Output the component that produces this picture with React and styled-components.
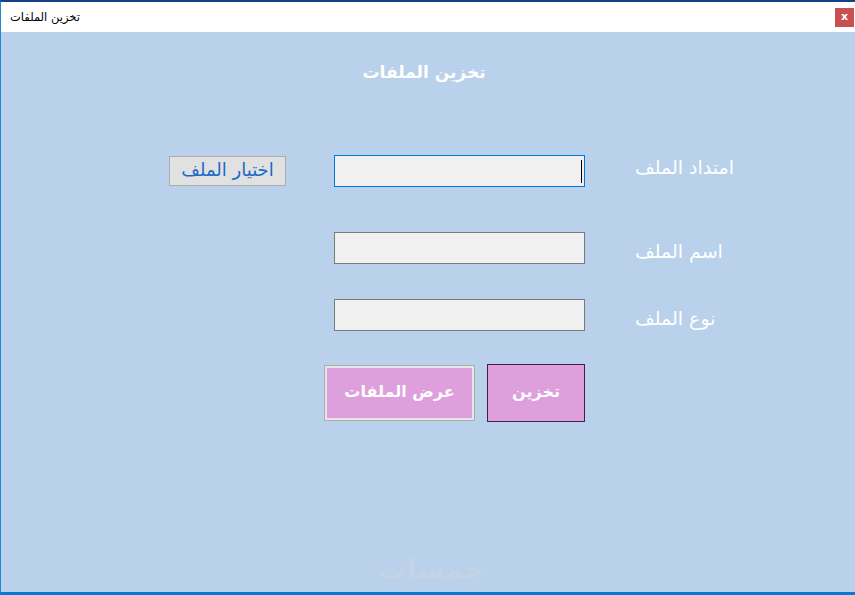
import styled, { createGlobalStyle } from 'styled-components';

const Global = createGlobalStyle`
  html, body {
    margin: 0;
    padding: 0;
    background: #b9d1ea;
  }
  #root {
    width: 855px;
    height: 595px;
  }
`;

export default function App() {
  return (
    <>
      <Global />
      <Window>
        <TitleBar>
          <Caption dir="rtl">تخزين الملفات</Caption>
          <CloseButton>x</CloseButton>
        </TitleBar>
        <Body>
          <Heading dir="rtl">تخزين الملفات</Heading>
          <Form>
            <Row>
              <Slot $w={118}>
                <BrowseButton dir="rtl">اختيار الملف</BrowseButton>
              </Slot>
              <Field $active />
              <Label dir="rtl" $offset={-4}>امتداد الملف</Label>
            </Row>
            <Row $top={45}>
              <Slot $w={118} />
              <Field />
              <Label dir="rtl" $offset={3}>اسم الملف</Label>
            </Row>
            <Row $top={35}>
              <Slot $w={118} />
              <Field />
              <Label dir="rtl" $offset={3}>نوع الملف</Label>
            </Row>
            <Actions>
              <ActionButton $w={151} $h={56} $variant="ghost" dir="rtl">عرض الملفات</ActionButton>
              <ActionButton $w={98} $h={58} dir="rtl">تخزين</ActionButton>
            </Actions>
          </Form>
          <Watermark dir="rtl">خمسات</Watermark>
        </Body>
      </Window>
    </>
  );
}

const Window = styled.div`
  width: 855px;
  height: 595px;
  box-sizing: border-box;
  display: flex;
  flex-direction: column;
  border-top: 2px solid #163f86;
  border-left: 1px solid #1e88d0;
  border-bottom: 3px solid #0a78d2;
  font-family: "DejaVu Sans", "Noto Sans", sans-serif;
`;

const TitleBar = styled.div`
  height: 30px;
  background: #ffffff;
  display: flex;
  align-items: center;
  justify-content: space-between;
  padding: 0 1px 0 9px;
`;

const Caption = styled.span`
  font-size: 11.5px;
  color: #000;
`;

const CloseButton = styled.div`
  width: 19px;
  height: 19px;
  background: #c75050;
  color: #fff;
  font-size: 11px;
  font-weight: bold;
  display: flex;
  align-items: center;
  justify-content: center;
  line-height: 1;
  padding-bottom: 2px;
  box-sizing: border-box;
`;

const Body = styled.div`
  position: relative;
  flex: 1;
  background: #b9d1ea;
  display: flex;
  flex-direction: column;
  padding-top: 28px;
`;

const Heading = styled.h1`
  margin: 0;
  text-align: center;
  font-size: 17px;
  line-height: 24px;
  font-weight: bold;
  color: #ffffff;
  padding-right: 8px;
`;

const Form = styled.div`
  display: flex;
  flex-direction: column;
  padding-left: 167px;
  margin-top: 71px;
`;

const Row = styled.div`
  display: flex;
  align-items: center;
  gap: 48px;
  margin-top: ${p => p.$top || 0}px;
`;

const Slot = styled.div`
  width: ${p => p.$w}px;
  display: flex;
`;

const BrowseButton = styled.button`
  width: 119px;
  height: 30px;
  background: #e1e1e1;
  border: 1px solid #adadad;
  color: #1a6bc9;
  font-family: "DejaVu Sans", sans-serif;
  font-size: 18px;
  padding: 0 0 3px;
  margin-left: 1px;
`;

const Field = styled.div`
  position: relative;
  width: 251px;
  height: 32px;
  box-sizing: border-box;
  background: #f0f0f0;
  border: 1px solid ${p => (p.$active ? '#0078d7' : '#7a7a7a')};

  ${p => p.$active && `
    &::after {
      content: '';
      position: absolute;
      right: 2px;
      top: 4px;
      width: 1.5px;
      height: 23px;
      background: #000;
    }
  `}
`;

const Label = styled.span`
  margin-left: 2px;
  font-size: 19px;
  color: #ffffff;
  padding-top: ${p => Math.max(0, p.$offset * 2)}px;
  padding-bottom: ${p => Math.max(0, -p.$offset * 2)}px;
`;

const Actions = styled.div`
  display: flex;
  align-items: center;
  gap: 12px;
  margin-top: 33px;
  padding-left: 156px;
`;

const ActionButton = styled.button`
  width: ${p => p.$w}px;
  height: ${p => p.$h}px;
  box-sizing: border-box;
  background: #dda0dd;
  color: #ffffff;
  font-family: "DejaVu Sans", sans-serif;
  font-size: 16px;
  font-weight: bold;
  padding: 0 0 3px;
  border: ${p => (p.$variant === 'ghost' ? '1px solid #adadad' : '1px solid #4a1a4a')};
  box-shadow: ${p => (p.$variant === 'ghost' ? 'inset 0 0 0 2px #e6e6e6' : 'none')};
`;

const Watermark = styled.div`
  position: absolute;
  left: 377px;
  bottom: 6px;
  font-size: 28px;
  font-weight: bold;
  color: #c4d3e5;
  letter-spacing: 1px;
`;
